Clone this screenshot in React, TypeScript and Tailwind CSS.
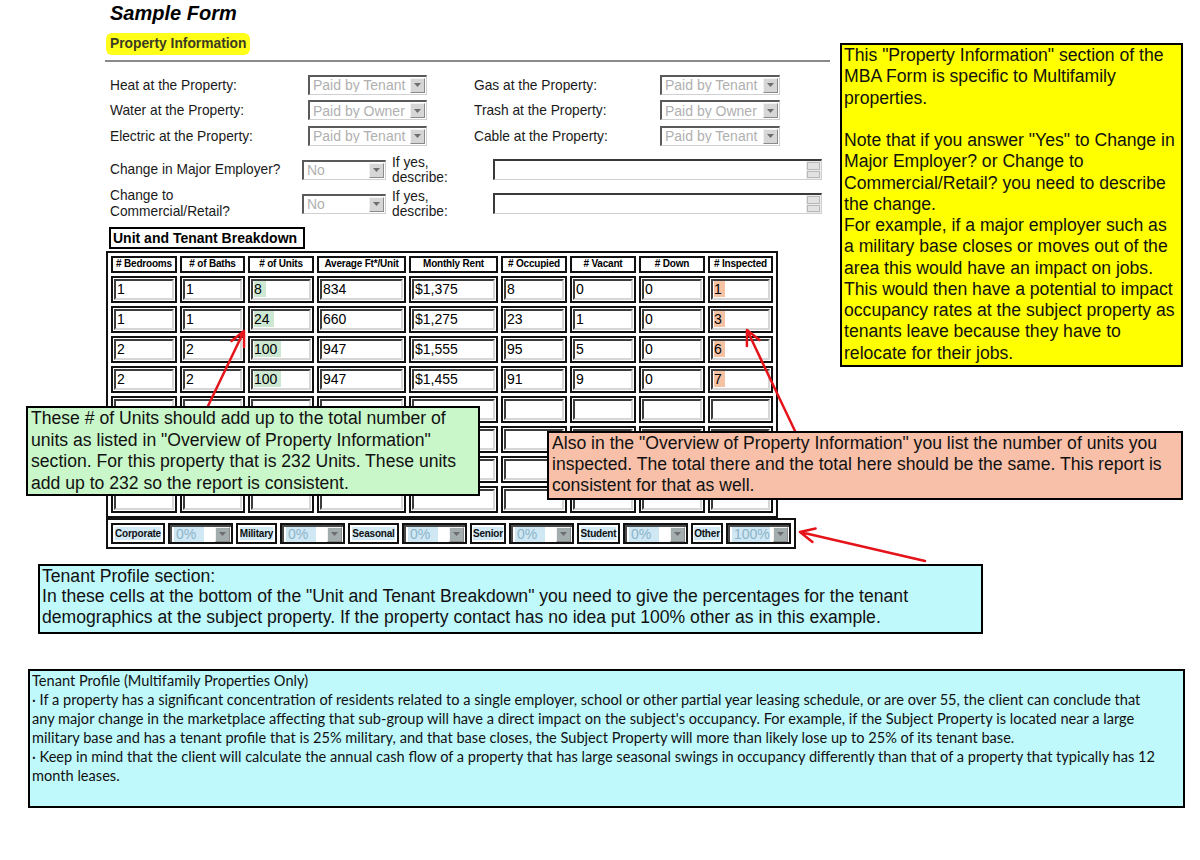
import React from 'react';

const Arrow = ({ dark }: { dark?: boolean }) => (
  <span
    className={`flex h-[15px] w-[15px] shrink-0 items-center justify-center border border-t-[#f2f2f2] border-l-[#f2f2f2] border-b-[#8a8a8a] border-r-[#8a8a8a] ${
      dark ? 'bg-[#a3adad]' : 'bg-[#d6d6d6]'
    }`}
  >
    <svg width="7" height="4" viewBox="0 0 7 4">
      <path d="M0 0h7L3.5 4z" fill="#6e6e6e" />
    </svg>
  </span>
);

function Dropdown({ value, width }: { value: string; width: string }) {
  return (
    <div
      className={`flex h-[20px] items-center border-t-2 border-l-2 border-b border-r border-t-[#5a5a5a] border-l-[#5a5a5a] border-b-[#d0d0d0] border-r-[#d0d0d0] bg-white pr-[1px] ${width}`}
    >
      <span className="flex-1 truncate pl-[3px] text-[14px] leading-none text-[#b0b0b0]">{value}</span>
      <Arrow />
    </div>
  );
}

const TextBox = () => (
  <div className="flex h-[21px] w-[329px] border-t-2 border-l-2 border-b border-r border-t-[#3a3a3a] border-l-[#3a3a3a] border-b-[#cfcfcf] border-r-[#cfcfcf] bg-white">
    <div className="ml-auto flex w-[15px] flex-col gap-[1px] bg-[#ececec] p-[1px]">
      <div className="flex-1 border border-[#b8b8b8] bg-[#e2e2e2]" />
      <div className="flex-1 border border-[#b8b8b8] bg-[#e2e2e2]" />
    </div>
  </div>
);

function Cell({ value, mark }: { value?: string; mark?: 'green' | 'orange' }) {
  return (
    <td className="border-2 border-[#111] p-[1px]">
      <div className="h-[21px] border-2 border-t-[#3c3c3c] border-l-[#3c3c3c] border-b-[#d6d6d6] border-r-[#d6d6d6] bg-white pl-[1px] text-[14px] leading-[17px] text-black">
        {mark ? (
          <span className={mark === 'green' ? 'bg-[#cde8d2] pr-[4px]' : 'bg-[#f5c3a3] pr-[3px]'}>{value}</span>
        ) : (
          value
        )}
      </div>
    </td>
  );
}

const headers: [string, string][] = [
  ['# Bedrooms', 'w-[62px]'],
  ['# of Baths', 'w-[61px]'],
  ['# of Units', 'w-[62px]'],
  ['Average Ft*/Unit', 'w-[85px]'],
  ['Monthly Rent', 'w-[85px]'],
  ['# Occupied', 'w-[62px]'],
  ['# Vacant', 'w-[62px]'],
  ['# Down', 'w-[62px]'],
  ['# Inspected', 'w-[61px]'],
];

const rows = [
  ['1', '1', '8', '834', '$1,375', '8', '0', '0', '1'],
  ['1', '1', '24', '660', '$1,275', '23', '1', '0', '3'],
  ['2', '2', '100', '947', '$1,555', '95', '5', '0', '6'],
  ['2', '2', '100', '947', '$1,455', '91', '9', '0', '7'],
  ['', '', '', '', '', '', '', '', ''],
  ['', '', '', '', '', '', '', '', ''],
  ['', '', '', '', '', '', '', '', ''],
  ['', '', '', '', '', '', '', '', ''],
];

const tenants: [string, string, string][] = [
  ['Corporate', 'w-[54px]', '0%'],
  ['Military', 'w-[41px]', '0%'],
  ['Seasonal', 'w-[51px]', '0%'],
  ['Senior', 'w-[36px]', '0%'],
  ['Student', 'w-[43px]', '0%'],
  ['Other', 'w-[32px]', '100%'],
];

function arrowPath(x1: number, y1: number, x2: number, y2: number) {
  const a = Math.atan2(y2 - y1, x2 - x1);
  const len = 16;
  const s = 0.45;
  const ax = x2 - len * Math.cos(a - s);
  const ay = y2 - len * Math.sin(a - s);
  const bx = x2 - len * Math.cos(a + s);
  const by = y2 - len * Math.sin(a + s);
  return `M${x1} ${y1}L${x2} ${y2}M${ax} ${ay}L${x2} ${y2}L${bx} ${by}`;
}

const yellowLines = [
  'This "Property Information" section of the',
  'MBA Form is specific to Multifamily',
  'properties.',
  '',
  'Note that if you answer "Yes" to Change in',
  'Major Employer? or Change to',
  'Commercial/Retail? you need to describe',
  'the change.',
  'For example, if a major employer such as',
  'a military base closes or moves out of the',
  'area this would have an impact on jobs.',
  'This would then have a potential to impact',
  'occupancy rates at the subject property as',
  'tenants leave because they have to',
  'relocate for their jobs.',
];

const profileLines = [
  'Tenant Profile (Multifamily Properties Only)',
  '· If a property has a significant concentration of residents related to a single employer, school or other partial year leasing schedule, or are over 55, the client can conclude that',
  "any major change in the marketplace affecting that sub-group will have a direct impact on the subject's occupancy. For example, if the Subject Property is located near a large",
  'military base and has a tenant profile that is 25% military, and that base closes, the Subject Property will more than likely lose up to 25% of its tenant base.',
  '· Keep in mind that the client will calculate the annual cash flow of a property that has large seasonal swings in occupancy differently than that of a property that typically has 12',
  'month leases.',
];

export default function App() {
  return (
    <div className="relative h-[860px] w-[1200px] overflow-hidden bg-white font-['Liberation_Sans',Arial,sans-serif] text-[#1a1a1a]">
      <div className="flex">
        {/* form column */}
        <div className="ml-[105px] w-[725px]">
          <div className="h-[26px] pl-[5px] text-[20px] font-bold italic leading-[26px] text-black">Sample Form</div>
          <div className="ml-[1px] mt-[7px] h-[22px] w-[144px] rounded-[6px] bg-[#ffff1a] pl-[4px] text-[13.8px] font-bold leading-[22px] text-[#3b3b22]">
            Property Information
          </div>
          <div className="mt-[5px] h-[2px] bg-[#8a8a8a]" />

          <div className="mt-[10px]">
            {[
              ['Heat at the Property:', 'Paid by Tenant', 'Gas at the Property:', 'Paid by Tenant'],
              ['Water at the Property:', 'Paid by Owner', 'Trash at the Property:', 'Paid by Owner'],
              ['Electric at the Property:', 'Paid by Tenant', 'Cable at the Property:', 'Paid by Tenant'],
            ].map(([l1, v1, l2, v2]) => (
              <div key={l1} className="flex h-[25.5px] items-center text-[13.75px]">
                <div className="w-[203px] pl-[5px] pt-[3px]">{l1}</div>
                <Dropdown value={v1} width="w-[119px]" />
                <div className="ml-[47px] w-[186px] pt-[3px]">{l2}</div>
                <Dropdown value={v2} width="w-[120px]" />
              </div>
            ))}
          </div>

          <div className="mt-[6px] flex h-[30px] items-center text-[13.75px]">
            <div className="w-[197px] pl-[5px] pt-[2px]">Change in Major Employer?</div>
            <Dropdown value="No" width="w-[84px]" />
            <div className="ml-[6px] w-[101px] leading-[15px]">
              If yes,
              <br />
              describe:
            </div>
            <TextBox />
          </div>
          <div className="mt-[3px] flex h-[32px] items-center text-[13.75px]">
            <div className="w-[197px] pl-[5px] leading-[16px]">
              Change to
              <br />
              Commercial/Retail?
            </div>
            <Dropdown value="No" width="w-[84px]" />
            <div className="ml-[6px] w-[101px] leading-[15px]">
              If yes,
              <br />
              describe:
            </div>
            <TextBox />
          </div>

          <div className="ml-[4px] mt-[7px] h-[22px] w-[196px] border-2 border-black pl-[2px] text-[14px] font-bold leading-[18px] text-black">
            Unit and Tenant Breakdown
          </div>

          <table className="ml-[1px] mt-[2px] border-separate border-spacing-[3px] border-2 border-[#111] bg-white">
            <thead>
              <tr>
                {headers.map(([h, w]) => (
                  <th key={h} className="border-2 border-[#111] p-0">
                    <div className={`flex h-[13px] items-center justify-center whitespace-nowrap text-[10px] font-bold leading-none tracking-[-0.2px] text-black ${w}`}>
                      {h}
                    </div>
                  </th>
                ))}
              </tr>
            </thead>
            <tbody>
              {rows.map((r, i) => (
                <tr key={i}>
                  {r.map((v, j) => (
                    <Cell key={j} value={v} mark={v && j === 2 ? 'green' : v && j === 8 ? 'orange' : undefined} />
                  ))}
                </tr>
              ))}
            </tbody>
          </table>

          <div className="ml-[1px] flex w-[690px] gap-[3px] border-2 border-[#111] p-[3px]">
            {tenants.map(([label, w, v]) => (
              <React.Fragment key={label}>
                <div className={`flex h-[21px] items-center justify-center border-2 border-[#111] bg-white ${w}`}>
                  <span className="whitespace-nowrap bg-[#d3ebf7] text-[10px] font-bold leading-[13px] tracking-[-0.2px] text-[#111]">{label}</span>
                </div>
                <div className="h-[21px] w-[65px] border-2 border-[#111]">
                  <div className="flex h-full items-center border-t-2 border-l-2 border-t-[#4a4a4a] border-l-[#4a4a4a] bg-white pr-[1px]">
                    <span className="flex-1 pl-[2px]">
                      <span className="inline-block min-w-[30px] bg-[#d0e7f4] pl-[2px] text-[14px] leading-[15px] text-[#8bb5c9]">{v}</span>
                    </span>
                    <Arrow dark />
                  </div>
                </div>
              </React.Fragment>
            ))}
          </div>
        </div>

        {/* note on the right */}
        <div className="ml-[10px] mt-[43px] h-[324px] w-[343px] border-2 border-black bg-[#ffff00] pl-[2px] text-[17.6px] leading-[21.25px] text-[#111]">
          {yellowLines.map((l, i) => (
            <div key={i} className="h-[21.25px] whitespace-nowrap">
              {l}
            </div>
          ))}
        </div>
      </div>

      <div className="ml-[38px] mt-[15px] h-[70px] w-[945px] border-2 border-black bg-[#bff9fc] pl-[2px] text-[17.6px] leading-[20.5px] text-[#111]">
        <div>Tenant Profile section:</div>
        <div className="whitespace-nowrap">
          In these cells at the bottom of the "Unit and Tenant Breakdown" you need to give the percentages for the tenant
        </div>
        <div className="whitespace-nowrap">
          demographics at the subject property. If the property contact has no idea put 100% other as in this example.
        </div>
      </div>

      <div className="ml-[28px] mt-[35px] h-[139px] w-[1157px] border-2 border-black bg-[#bff9fc] pl-[2px] font-['Lato',sans-serif] text-[14.6px] leading-[19px] text-[#111]">
        {profileLines.map((l, i) => (
          <div key={i} className="whitespace-nowrap">
            {l}
          </div>
        ))}
      </div>

      {/* arrows */}
      <svg className="pointer-events-none absolute left-0 top-0" width="1200" height="860">
        <g stroke="#e5141a" strokeWidth="2.5" fill="none" strokeLinecap="round" strokeLinejoin="round">
          <path d={arrowPath(208, 406, 244, 331)} />
          <path d={arrowPath(795, 431, 747, 330)} />
          <path d={arrowPath(925, 561, 800, 532)} />
        </g>
      </svg>

      {/* callouts over the table */}
      <div className="absolute left-[26px] top-[406px] h-[90px] w-[454px] border-2 border-black bg-[#c9f7c9] pl-[3px] text-[17.6px] leading-[21.5px] text-[#111]">
        <div className="whitespace-nowrap">These # of Units should add up to the total number of</div>
        <div className="whitespace-nowrap">units as listed in "Overview of Property Information"</div>
        <div className="whitespace-nowrap">section. For this property that is 232 Units. These units</div>
        <div className="whitespace-nowrap">add up to 232 so the report is consistent.</div>
      </div>

      <div className="absolute left-[547px] top-[431px] h-[69px] w-[636px] border-2 border-black bg-[#f8c0a8] pl-[3px] text-[17.6px] leading-[21px] text-[#111]">
        <div className="whitespace-nowrap">Also in the "Overview of Property Information" you list the number of units you</div>
        <div className="whitespace-nowrap">inspected. The total there and the total here should be the same. This report is</div>
        <div className="whitespace-nowrap">consistent for that as well.</div>
      </div>
    </div>
  );
}
